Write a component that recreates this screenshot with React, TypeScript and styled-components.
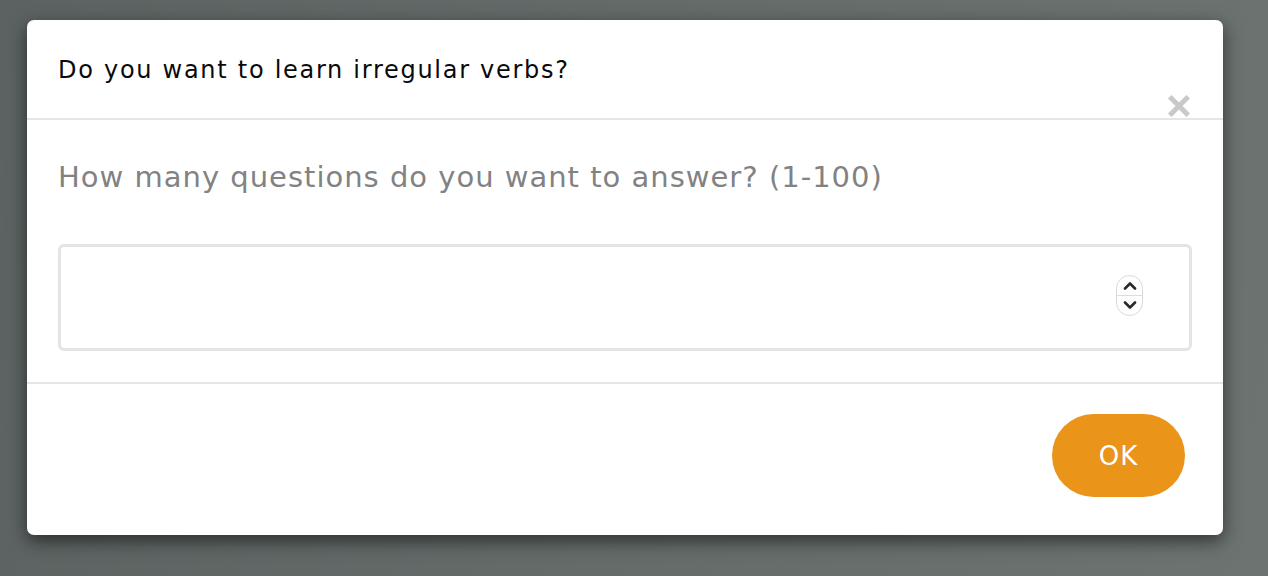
import React from "react";
import styled, { createGlobalStyle } from "styled-components";

const Global = createGlobalStyle`
  html, body { margin: 0; padding: 0; }
  body {
    font-family: "DejaVu Sans", "Open Sans", sans-serif;
    background: #646b69;
  }
`;

const Backdrop = styled.div`
  width: 1268px;
  height: 576px;
  box-sizing: border-box;
  padding: 20px 0 0 27px;
  background: linear-gradient(100deg, #5b6261 0%, #646b69 50%, #6c7371 100%);
  overflow: hidden;
`;

const Modal = styled.div`
  width: 1196px;
  background: #fff;
  border-radius: 7px;
  box-shadow: 0 6px 18px rgba(0, 0, 0, 0.55);
  display: flex;
  flex-direction: column;
`;

const Header = styled.div`
  height: 98px;
  display: flex;
  justify-content: space-between;
  align-items: flex-start;
  padding: 0 33px 0 31px;
  border-bottom: 2px solid #e5e5e5;
`;

const Title = styled.h4`
  margin: 34px 0 0;
  font-size: 24px;
  font-weight: 400;
  letter-spacing: 1.72px;
  line-height: 32px;
  color: #0a0a0a;
`;

const Close = styled.button`
  margin-top: 75px;
  width: 22px;
  height: 22px;
  padding: 0;
  border: none;
  background: transparent;
  display: flex;
  cursor: pointer;
`;

const Body = styled.div`
  padding: 37px 31px 31px;
  border-bottom: 2px solid #e5e5e5;
`;

const Question = styled.p`
  margin: 0 0 47px;
  font-size: 29px;
  letter-spacing: 1px;
  line-height: 40px;
  color: #828282;
`;

const Field = styled.div`
  height: 107px;
  box-sizing: border-box;
  border: 3px solid #e4e4e4;
  border-radius: 6px;
  display: flex;
  align-items: center;
  padding: 0 46px 0 20px;
`;

const Input = styled.input`
  flex: 1;
  border: none;
  outline: none;
  font-size: 26px;
  font-family: inherit;
  background: transparent;
`;

const Spinner = styled.div`
  width: 27px;
  height: 41px;
  box-sizing: border-box;
  border: 1px solid #d9d9d9;
  border-radius: 14px;
  display: flex;
  flex-direction: column;
  margin-top: -4px;
  background: #fff;
`;

const SpinHalf = styled.div<{ $top?: boolean }>`
  flex: 1;
  display: flex;
  align-items: center;
  justify-content: center;
  border-bottom: ${(p) => (p.$top ? "1px solid #dcdcdc" : "none")};
`;

const Footer = styled.div`
  display: flex;
  justify-content: flex-end;
  padding: 30px 38px 38px;
`;

const OkButton = styled.button`
  width: 133px;
  height: 83px;
  border: none;
  border-radius: 42px;
  background: #ea941a;
  color: #fff;
  font-family: inherit;
  font-size: 26px;
  letter-spacing: 1px;
  font-weight: 400;
  cursor: pointer;
`;

const Chevron = ({ up }: { up?: boolean }) => (
  <svg width="14" height="9" viewBox="0 0 14 9">
    <path
      d={up ? "M2 7.5 L7 2.5 L12 7.5" : "M2 1.5 L7 6.5 L12 1.5"}
      fill="none"
      stroke="#2a2a2a"
      strokeWidth="2.6"
      strokeLinecap="round"
      strokeLinejoin="round"
    />
  </svg>
);

export default function App() {
  return (
    <>
      <Global />
      <Backdrop>
        <Modal>
          <Header>
            <Title>Do you want to learn irregular verbs?</Title>
            <Close aria-label="Close">
              <svg width="22" height="22" viewBox="0 0 22 22">
                <path
                  d="M3.5 3.5 L18.5 18.5 M18.5 3.5 L3.5 18.5"
                  stroke="#c9c9c9"
                  strokeWidth="5"
                  strokeLinecap="square"
                />
              </svg>
            </Close>
          </Header>
          <Body>
            <Question>How many questions do you want to answer? (1-100)</Question>
            <Field>
              <Input type="text" inputMode="numeric" />
              <Spinner>
                <SpinHalf $top>
                  <Chevron up />
                </SpinHalf>
                <SpinHalf>
                  <Chevron />
                </SpinHalf>
              </Spinner>
            </Field>
          </Body>
          <Footer>
            <OkButton>OK</OkButton>
          </Footer>
        </Modal>
      </Backdrop>
    </>
  );
}
